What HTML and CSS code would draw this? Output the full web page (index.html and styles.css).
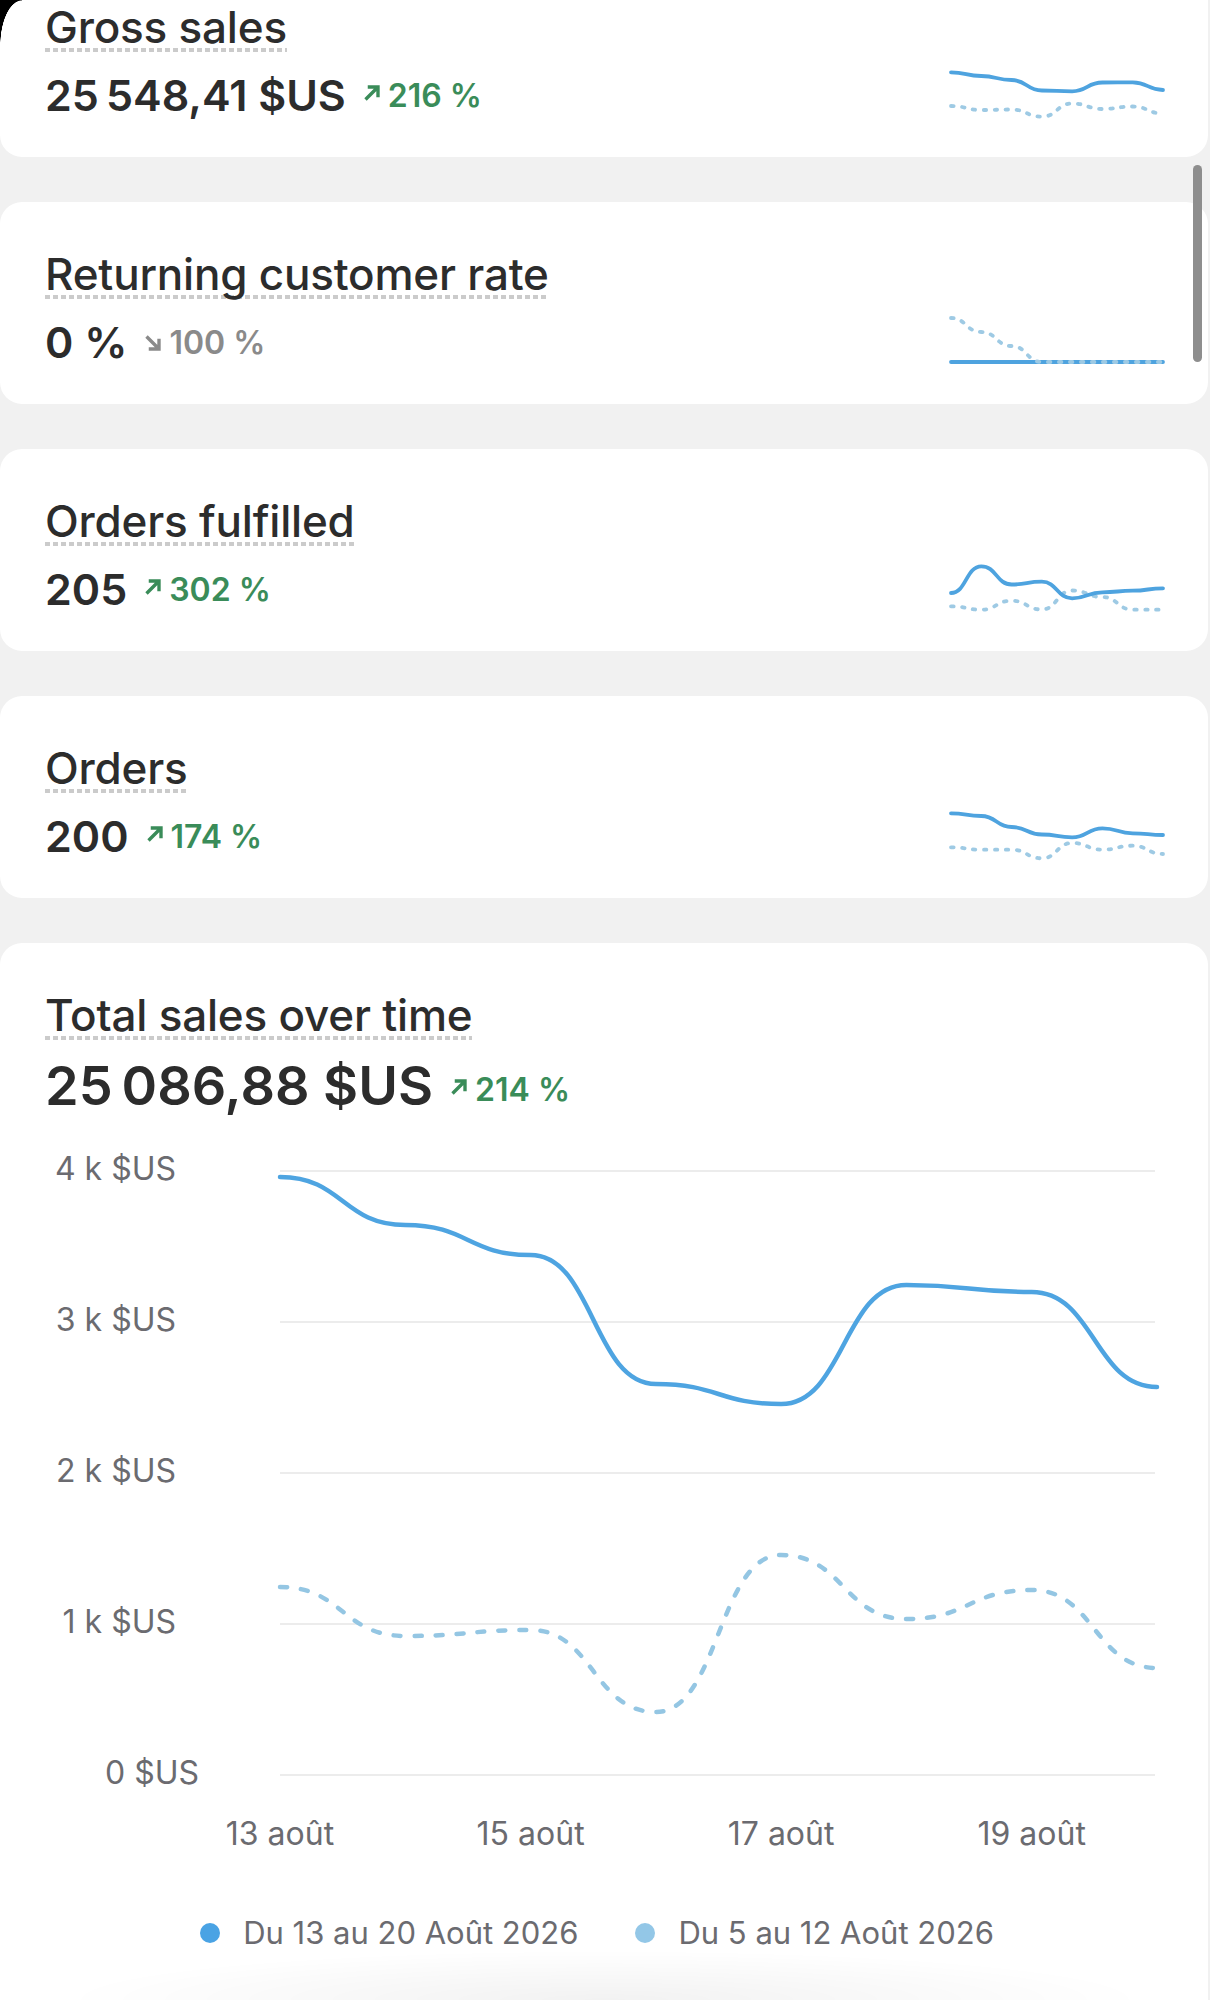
FILE: index.html
```html
<!DOCTYPE html>
<html lang="fr">
<head>
<meta charset="utf-8">
<title>Analytics</title>
<link rel="stylesheet" href="styles.css">
</head>
<body>
<div class="corner"></div>
<div class="scrollbar"></div>
<div class="home-fade"></div>
<main class="list">
  <section class="card metric">
    <div class="metric-text">
      <h2 class="title">Gross sales</h2>
      <div class="value-row"><span class="value">25&#8239;548,41&nbsp;$US</span><span class="change up"><svg class="arrow" viewBox="0 0 16 16"><path d="M2.8 13.2 L12.8 3.2 M4.6 3.2 H12.8 V11.4"/></svg>216&nbsp;%</span></div>
    </div>
    <svg class="spark" viewBox="0 0 212 54">
      <path class="s-prev" d="M0 38 C15.14 38 15.14 42 30.29 42 C45.43 42 45.43 41.5 60.57 41.5 C75.71 41.5 75.71 48.7 90.86 48.7 C106 48.7 106 35.5 121.14 35.5 C136.29 35.5 136.29 41 151.43 41 C166.57 41 166.57 38.5 181.71 38.5 C196.86 38.5 196.86 45.5 212 45.5"/>
      <path class="s-cur" d="M0 4.3 C15.14 4.3 15.14 8 30.29 8 C45.43 8 45.43 12 60.57 12 C75.71 12 75.71 22.5 90.86 22.5 C106 22.5 106 23.3 121.14 23.3 C136.29 23.3 136.29 14.5 151.43 14.5 C166.57 14.5 166.57 14.3 181.71 14.3 C196.86 14.3 196.86 22 212 22"/>
    </svg>
  </section>

  <section class="card metric">
    <div class="metric-text">
      <h2 class="title">Returning customer rate</h2>
      <div class="value-row"><span class="value">0&nbsp;%</span><span class="change down"><svg class="arrow" viewBox="0 0 16 16"><path d="M2.8 2.8 L12.8 12.8 M12.8 4.6 V12.8 H4.6"/></svg>100&nbsp;%</span></div>
    </div>
    <svg class="spark" viewBox="0 0 212 54">
      <path class="s-cur" d="M0 47 H212"/>
      <path class="s-prev" d="M0 3 C15.14 3 15.14 17 30.29 17 C45.43 17 45.43 31 60.57 31 C75.71 31 75.71 47 90.86 47 H212"/>
    </svg>
  </section>

  <section class="card metric">
    <div class="metric-text">
      <h2 class="title">Orders fulfilled</h2>
      <div class="value-row"><span class="value">205</span><span class="change up"><svg class="arrow" viewBox="0 0 16 16"><path d="M2.8 13.2 L12.8 3.2 M4.6 3.2 H12.8 V11.4"/></svg>302&nbsp;%</span></div>
    </div>
    <svg class="spark" viewBox="0 0 212 54">
      <path class="s-prev" d="M0 44.3 C15.14 44.3 15.14 47.7 30.29 47.7 C45.43 47.7 45.43 38.7 60.57 38.7 C75.71 38.7 75.71 47.5 90.86 47.5 C106 47.5 106 28.5 121.14 28.5 C136.29 28.5 136.29 35 151.43 35 C166.57 35 166.57 47.7 181.71 47.7 C196.86 47.7 196.86 47.7 212 47.7"/>
      <path class="s-cur" d="M0 31 C15.14 31 15.14 4.3 30.29 4.3 C45.43 4.3 45.43 22.5 60.57 22.5 C75.71 22.5 75.71 19.7 90.86 19.7 C106 19.7 106 36.3 121.14 36.3 C136.29 36.3 136.29 30.3 151.43 30.3 C166.57 30.3 166.57 28.7 181.71 28.7 C196.86 28.7 196.86 26.3 212 26.3"/>
    </svg>
  </section>

  <section class="card metric">
    <div class="metric-text">
      <h2 class="title">Orders</h2>
      <div class="value-row"><span class="value">200</span><span class="change up"><svg class="arrow" viewBox="0 0 16 16"><path d="M2.8 13.2 L12.8 3.2 M4.6 3.2 H12.8 V11.4"/></svg>174&nbsp;%</span></div>
    </div>
    <svg class="spark" viewBox="0 0 212 54">
      <path class="s-prev" d="M0 38.3 C15.14 38.3 15.14 40.7 30.29 40.7 C45.43 40.7 45.43 40.7 60.57 40.7 C75.71 40.7 75.71 49.3 90.86 49.3 C106 49.3 106 34 121.14 34 C136.29 34 136.29 40.7 151.43 40.7 C166.57 40.7 166.57 36.7 181.71 36.7 C196.86 36.7 196.86 45 212 45"/>
      <path class="s-cur" d="M0 4.3 C15.14 4.3 15.14 7 30.29 7 C45.43 7 45.43 18 60.57 18 C75.71 18 75.71 25.5 90.86 25.5 C106 25.5 106 28.3 121.14 28.3 C136.29 28.3 136.29 19.3 151.43 19.3 C166.57 19.3 166.57 24.3 181.71 24.3 C196.86 24.3 196.86 26 212 26"/>
    </svg>
  </section>

  <section class="card chart-card">
    <h2 class="title">Total sales over time</h2>
    <div class="value-row big"><span class="value">25&#8239;086,88&nbsp;$US</span><span class="change up"><svg class="arrow" viewBox="0 0 16 16"><path d="M2.8 13.2 L12.8 3.2 M4.6 3.2 H12.8 V11.4"/></svg>214&nbsp;%</span></div>
    <svg class="chart" viewBox="45 1118 1118 762">
      <g class="grid">
        <line x1="280" y1="1173" x2="1155" y2="1173"/>
        <line x1="280" y1="1324" x2="1155" y2="1324"/>
        <line x1="280" y1="1475" x2="1155" y2="1475"/>
        <line x1="280" y1="1626" x2="1155" y2="1626"/>
        <line x1="280" y1="1777" x2="1155" y2="1777"/>
      </g>
      <g class="axis y-axis">
        <text x="176" y="1182">4 k $US</text>
        <text x="176" y="1333">3 k $US</text>
        <text x="176" y="1484">2 k $US</text>
        <text x="176" y="1635">1 k $US</text>
        <text x="199" y="1786">0 $US</text>
      </g>
      <g class="axis x-axis">
        <text x="280" y="1847">13 août</text>
        <text x="530.6" y="1847">15 août</text>
        <text x="781.1" y="1847">17 août</text>
        <text x="1031.7" y="1847">19 août</text>
      </g>
      <path class="c-prev" d="M280 1589 C342.6 1589 342.7 1638 405.3 1638 C467.9 1638 468 1632 530.6 1632 C593.2 1632 593.3 1714 655.9 1714 C718.5 1714 718.5 1557 781.1 1557 C843.7 1557 843.8 1621 906.4 1621 C969 1621 969.1 1592 1031.7 1592 C1094.3 1592 1094.4 1670 1157 1670"/>
      <path class="c-cur" d="M280 1179 C342.6 1179 342.7 1227 405.3 1227 C467.9 1227 468 1257 530.6 1257 C593.2 1257 593.3 1386 655.9 1386 C718.5 1386 718.5 1406 781.1 1406 C843.7 1406 843.8 1287 906.4 1287 C969 1287 969.1 1294 1031.7 1294 C1094.3 1294 1094.4 1389 1157 1389"/>
    </svg>
    <div class="legend">
      <span class="legend-item"><span class="dot dot-cur"></span>Du 13 au 20 Août 2026</span>
      <span class="legend-item"><span class="dot dot-prev"></span>Du 5 au 12 Août 2026</span>
    </div>
  </section>
</main>
</body>
</html>
```
FILE: styles.css
```css
html, body {
  margin: 0;
  padding: 0;
  overflow: hidden;
}

body {
  background: #f1f1f1;
  font-family: Inter, "Noto Sans", "Liberation Sans", sans-serif;
  color: #303030;
}

.list {
  margin-top: -45px;
  display: flex;
  flex-direction: column;
  gap: 45px;
}

.card {
  width: 1208px;
  box-sizing: border-box;
  background: #ffffff;
  border-radius: 22px;
  padding: 47px 45px 37px;
}

.metric {
  height: 202px;
  display: flex;
  justify-content: space-between;
  align-items: flex-start;
}

.title {
  display: inline-block;
  margin: 0;
  font-size: 44px;
  line-height: 50px;
  font-weight: 540;
  letter-spacing: -0.2px;
  color: #2c2c2c;
  background: repeating-linear-gradient(90deg, #cbcbcb 0 5px, transparent 5px 8px) left bottom / 100% 4px no-repeat;
}

.value-row {
  margin-top: 18px;
  font-size: 43px;
  line-height: 50px;
  white-space: nowrap;
}

.value {
  font-weight: 600;
  color: #2c2c2c;
}

.change {
  display: inline-block;
  vertical-align: 4px;
  margin-left: 16px;
  font-size: 32px;
  line-height: 32px;
  font-weight: 600;
}

.change.up {
  color: #3a8c59;
}

.change.down {
  color: #8a8a8a;
}

.arrow {
  width: 20px;
  height: 20px;
  margin-right: 6px;
  fill: none;
  stroke: currentColor;
  stroke-width: 2.7;
}

.up .arrow {
  vertical-align: 4px;
}

.down .arrow {
  vertical-align: 1px;
}

.spark {
  width: 212px;
  height: 54px;
  margin-top: 66px;
  flex: none;
  overflow: visible;
}

.s-cur {
  fill: none;
  stroke: #4ea3df;
  stroke-width: 3.8;
  stroke-linecap: round;
  stroke-linejoin: round;
}

.s-prev {
  fill: none;
  stroke: #9ecae4;
  stroke-width: 3.8;
  stroke-linecap: round;
  stroke-dasharray: 2.5 8.5;
}

.chart-card {
  padding-bottom: 100px;
}

.value-row.big {
  margin-top: 16px;
  font-size: 54px;
  line-height: 60px;
}

.chart {
  display: block;
  width: 1118px;
  height: 762px;
  overflow: visible;
}

.grid line {
  stroke: #ececec;
  stroke-width: 2;
}

.axis text {
  font-family: Inter, "Noto Sans", "Liberation Sans", sans-serif;
  font-size: 32px;
  fill: #6b6b70;
}

.y-axis text {
  text-anchor: end;
}

.x-axis text {
  text-anchor: middle;
}

.c-cur {
  fill: none;
  stroke: #4ea4e1;
  stroke-width: 4.5;
  stroke-linecap: round;
}

.c-prev {
  fill: none;
  stroke: #94c6e3;
  stroke-width: 4.5;
  stroke-linecap: round;
  stroke-dasharray: 7 14;
}

.legend {
  display: flex;
  justify-content: center;
  gap: 57px;
  margin-top: 37px;
  padding-right: 14px;
  font-size: 31px;
  line-height: 36px;
  color: #6b6b70;
}

.legend-item {
  display: flex;
  align-items: center;
  gap: 23px;
}

.dot {
  width: 20px;
  height: 20px;
  border-radius: 50%;
}

.dot-cur {
  background: #4aa3e4;
}

.dot-prev {
  background: #93c7e7;
}

.corner {
  position: fixed;
  top: 0;
  left: 0;
  width: 22px;
  height: 46px;
  background: radial-gradient(ellipse 22px 46px at 100% 100%, transparent 98%, #000 100%);
  z-index: 3;
}

.scrollbar {
  position: fixed;
  left: 1193px;
  top: 165px;
  width: 9px;
  height: 197px;
  border-radius: 5px;
  background: #8e8e8e;
  z-index: 3;
}

.home-fade {
  position: fixed;
  left: 0;
  right: 0;
  bottom: 0;
  height: 50px;
  background: radial-gradient(ellipse 45% 100% at 50% 100%, rgba(0, 0, 0, 0.05), transparent);
  z-index: 2;
}
```
